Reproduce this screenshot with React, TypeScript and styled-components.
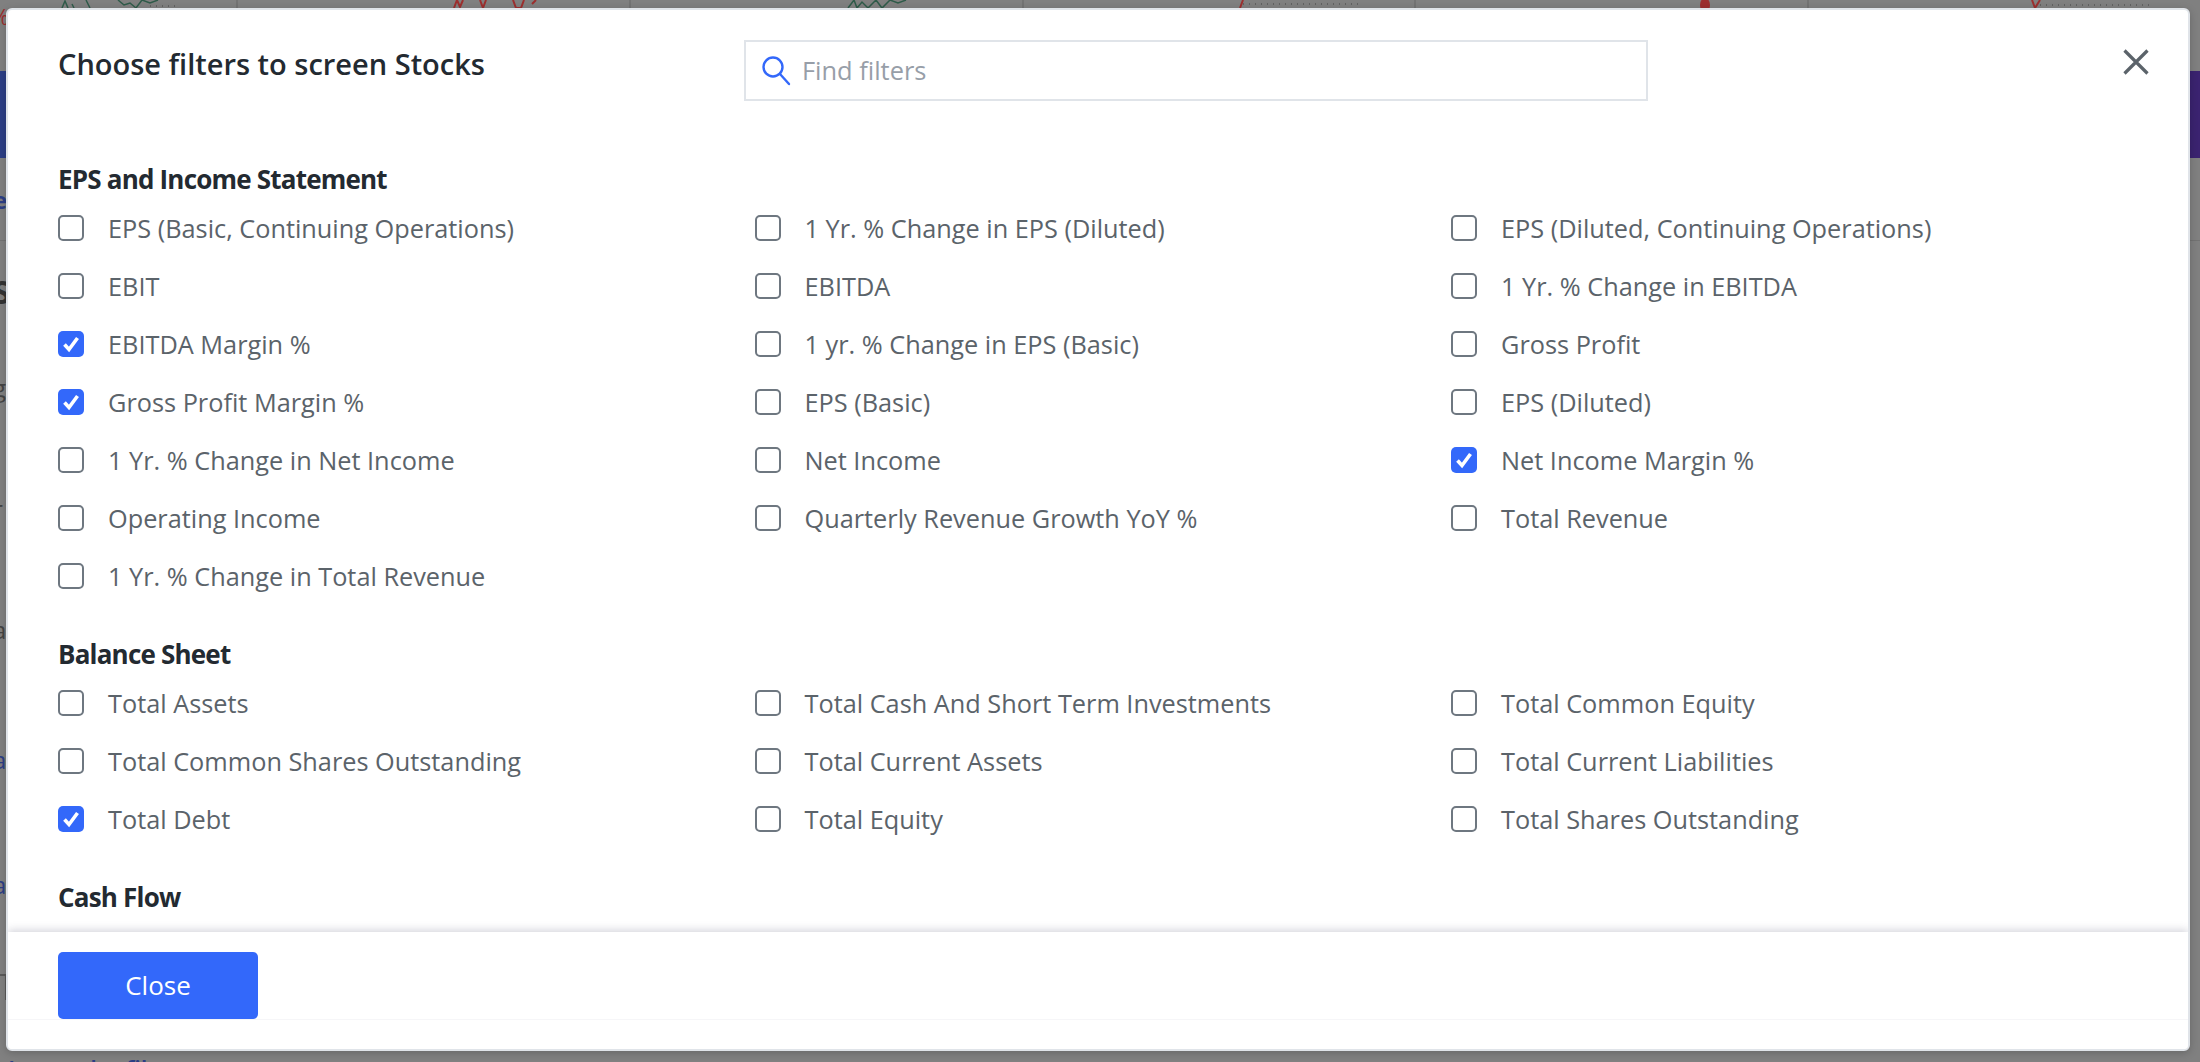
import styled, { createGlobalStyle } from "styled-components";

const GlobalStyle = createGlobalStyle`
  html, body {
    margin: 0;
    padding: 0;
    height: 100%;
    overflow: hidden;
    background: #808080;
    font-family: "Open Sans", "Liberation Sans", sans-serif;
  }
  * { box-sizing: border-box; }
`;

const Page = styled.div`
  position: relative;
  width: 2200px;
  height: 1062px;
  overflow: hidden;
  background: #808080;
`;

// what is left visible of the page behind the dialog
const Backdrop = styled.div`
  display: flex;
  flex-direction: column;
  height: 100%;
`;

const ChartStrip = styled.svg`
  display: block;
  flex: none;
  width: 2200px;
  height: 71px;
`;

const HeroBand = styled.div`
  flex: none;
  height: 87px;
  background: linear-gradient(90deg, #2c3e85 0%, #3b2370 100%);
`;

const EdgeChar = styled.div<{ $mt: number; $color: string; $bold?: boolean; $size?: number }>`
  flex: none;
  height: 14px;
  margin-top: ${(p) => p.$mt}px;
  margin-left: -7px;
  line-height: 14px;
  font-size: ${(p) => p.$size ?? 24}px;
  font-weight: ${(p) => (p.$bold ? 700 : 400)};
  color: ${(p) => p.$color};
`;

const EdgeRule = styled.div<{ $mt: number }>`
  flex: none;
  height: 1px;
  margin-top: ${(p) => p.$mt}px;
  background: #737373;
`;

const EdgeCorner = styled.div<{ $mt: number }>`
  flex: none;
  width: 7px;
  height: 26px;
  margin-top: ${(p) => p.$mt}px;
  border-top: 2px solid #5a5a5a;
  border-right: 2px solid #5a5a5a;
`;

const FooterLink = styled.div`
  flex: none;
  margin-top: 57px;
  margin-left: 8px;
  font-size: 24px;
  font-weight: 600;
  line-height: 24px;
  color: #2c3e85;
  white-space: nowrap;
`;

const Modal = styled.div`
  position: absolute;
  left: 6px;
  top: 8px;
  width: 2184px;
  height: 1043px;
  display: flex;
  flex-direction: column;
  background: #fff;
  border: 2px solid #e0e4e9;
  border-radius: 6px;
  box-shadow: 0 2px 8px rgba(0, 0, 0, 0.2);
  overflow: hidden;
`;

const Header = styled.div`
  flex: none;
  display: flex;
  align-items: flex-start;
  height: 91px;
  padding: 30px 39px 0 50px;
`;

const Title = styled.h1`
  width: 686px;
  margin: 6px 0 0;
  font-size: 29px;
  font-weight: 600;
  line-height: 36px;
  color: #232a31;
`;

const SearchBox = styled.label`
  display: flex;
  align-items: center;
  gap: 10px;
  width: 904px;
  height: 61px;
  padding: 0 14px 2px;
  border: 2px solid #e0e4e9;
`;

const SearchPlaceholder = styled.span`
  font-size: 25.4px;
  color: #979ea8;
`;

const CloseIcon = styled.button`
  margin: 9px 0 0 auto;
  padding: 0;
  border: 0;
  background: none;
  line-height: 0;
`;

const Body = styled.div`
  flex: 1;
  min-height: 0;
  overflow: hidden;
  padding: 0 50px;
`;

const SectionTitle = styled.h2<{ $first?: boolean }>`
  height: 32px;
  margin: ${(p) => (p.$first ? 62 : 33)}px 0 4px;
  font-size: 26px;
  font-weight: 700;
  line-height: 32px;
  letter-spacing: -0.8px;
  color: #232a31;
`;

const FilterGrid = styled.div`
  display: grid;
  grid-template-columns: repeat(3, 696.5px);
  grid-auto-rows: 58px;
`;

const FilterItem = styled.div`
  display: flex;
  align-items: center;
  gap: 24px;
`;

const CheckBox = styled.span<{ $on: boolean }>`
  flex: none;
  display: flex;
  align-items: center;
  justify-content: center;
  width: 26px;
  height: 26px;
  border-radius: 5px;
  border: ${(p) => (p.$on ? "none" : "2px solid #6e7780")};
  background: ${(p) => (p.$on ? "#3368fa" : "#fff")};
`;

const FilterLabel = styled.span`
  font-size: 25.3px;
  line-height: 32px;
  color: #5b636a;
  white-space: nowrap;
`;

const Footer = styled.div`
  flex: none;
  height: 117px;
  background: #fff;
  box-shadow: 0 -2px 8px rgba(60, 60, 90, 0.22);
  position: relative;
`;

const FooterBar = styled.div`
  height: 88px;
  padding: 20px 50px 0;
  border-bottom: 1px solid #f6f6f8;
`;

const CloseButton = styled.button`
  display: block;
  width: 200px;
  height: 67px;
  padding: 0 0 2px;
  border: 0;
  border-radius: 5px;
  background: #3368fa;
  color: #fff;
  font-family: inherit;
  font-size: 26px;
  font-weight: 400;
`;

const sections = [
  {
    title: "EPS and Income Statement",
    items: [
      "EPS (Basic, Continuing Operations)",
      "1 Yr. % Change in EPS (Diluted)",
      "EPS (Diluted, Continuing Operations)",
      "EBIT",
      "EBITDA",
      "1 Yr. % Change in EBITDA",
      "*EBITDA Margin %",
      "1 yr. % Change in EPS (Basic)",
      "Gross Profit",
      "*Gross Profit Margin %",
      "EPS (Basic)",
      "EPS (Diluted)",
      "1 Yr. % Change in Net Income",
      "Net Income",
      "*Net Income Margin %",
      "Operating Income",
      "Quarterly Revenue Growth YoY %",
      "Total Revenue",
      "1 Yr. % Change in Total Revenue",
    ],
  },
  {
    title: "Balance Sheet",
    items: [
      "Total Assets",
      "Total Cash And Short Term Investments",
      "Total Common Equity",
      "Total Common Shares Outstanding",
      "Total Current Assets",
      "Total Current Liabilities",
      "*Total Debt",
      "Total Equity",
      "Total Shares Outstanding",
    ],
  },
  { title: "Cash Flow", items: [] as string[] },
];

const Filter = ({ text }: { text: string }) => {
  const on = text.startsWith("*");
  return (
    <FilterItem>
      <CheckBox $on={on}>
        {on && (
          <svg width="20" height="20" viewBox="0 0 20 20" fill="none">
            <path d="M3.5 10.5l4.5 5L16.5 4" stroke="#fff" strokeWidth="3.6" />
          </svg>
        )}
      </CheckBox>
      <FilterLabel>{on ? text.slice(1) : text}</FilterLabel>
    </FilterItem>
  );
};

const Charts = () => (
  <ChartStrip viewBox="0 0 2200 71">
    <g stroke="#6f6f6f" strokeWidth="1.5">
      <path d="M237 0v8M630 0v8M1023 0v8M1415 0v8M1808 0v8" />
    </g>
    <g fill="none" stroke="#2f5b4a" strokeWidth="1.5">
      <path d="M62 8l3-7 3 7M72 4l2 4M86 0l4 8M118 0l6 5 6-2 6 5 6-8 8 3 8-3M848 8l6-8 3 8 5-6 6 6 8-8 6 8 8-8 8 3 8-3" />
    </g>
    <g fill="none" stroke="#9c2f2f" strokeWidth="2">
      <path d="M454 8l3-8 3 7 3-7M480 0l3 8 3-8M513 0l3 8 5 0 3-8M532 4l4-4" />
      <path d="M1240 8l3-8M2035 8l-3-8M2035 8l5-8" />
    </g>
    <g fill="#9c2f2f">
      <ellipse cx="1705" cy="5" rx="5" ry="7" />
      <path d="M345 8h4v2h-4zM430 8h3v2h-3zM1130 8h3v2h-3zM1510 8h3v2h-3z" />
    </g>
    <g stroke="#444" strokeWidth="1" strokeDasharray="1 5">
      <path d="M1243 4h118M2040 5h110M150 6h28" />
    </g>
    <text x="-9" y="25" fontSize="22" fill="#9c2f2f" fontFamily="Open Sans">%</text>
  </ChartStrip>
);

export default function App() {
  return (
    <Page>
      <GlobalStyle />
      <Backdrop>
        <Charts />
        <HeroBand />
        <EdgeChar $mt={35} $color="#2c3e85" $bold>e</EdgeChar>
        <EdgeRule $mt={33} />
        <EdgeChar $mt={44} $color="#333" $bold $size={32}>S</EdgeChar>
        <EdgeChar $mt={82} $color="#444">g</EdgeChar>
        <EdgeChar $mt={107} $color="#444">r</EdgeChar>
        <EdgeChar $mt={107} $color="#444">a</EdgeChar>
        <EdgeChar $mt={81} $color="#444">:</EdgeChar>
        <EdgeChar $mt={21} $color="#2c3e85">a</EdgeChar>
        <EdgeChar $mt={95} $color="#444">:</EdgeChar>
        <EdgeChar $mt={2} $color="#2c3e85">a</EdgeChar>
        <EdgeCorner $mt={82} />
        <FooterLink>Learn the filters</FooterLink>
      </Backdrop>
      <Modal>
        <Header>
          <Title>Choose filters to screen Stocks</Title>
          <SearchBox>
            <svg width="32" height="32" viewBox="0 0 32 32" fill="none">
              <circle cx="13" cy="13" r="9.5" stroke="#3368fa" strokeWidth="2.4" />
              <path d="M20 20l9 10" stroke="#3368fa" strokeWidth="2.4" strokeLinecap="round" />
            </svg>
            <SearchPlaceholder>Find filters</SearchPlaceholder>
          </SearchBox>
          <CloseIcon aria-label="Close">
            <svg width="26" height="26" viewBox="0 0 26 26" fill="none">
              <path d="M1.5 1.5l23 23M24.5 1.5l-23 23" stroke="#5b636a" strokeWidth="3.2" />
            </svg>
          </CloseIcon>
        </Header>
        <Body>
          {sections.map((s, i) => (
            <div key={s.title}>
              <SectionTitle $first={i === 0}>{s.title}</SectionTitle>
              <FilterGrid>
                {s.items.map((t) => (
                  <Filter key={t} text={t} />
                ))}
              </FilterGrid>
            </div>
          ))}
        </Body>
        <Footer>
          <FooterBar>
            <CloseButton>Close</CloseButton>
          </FooterBar>
        </Footer>
      </Modal>
    </Page>
  );
}
